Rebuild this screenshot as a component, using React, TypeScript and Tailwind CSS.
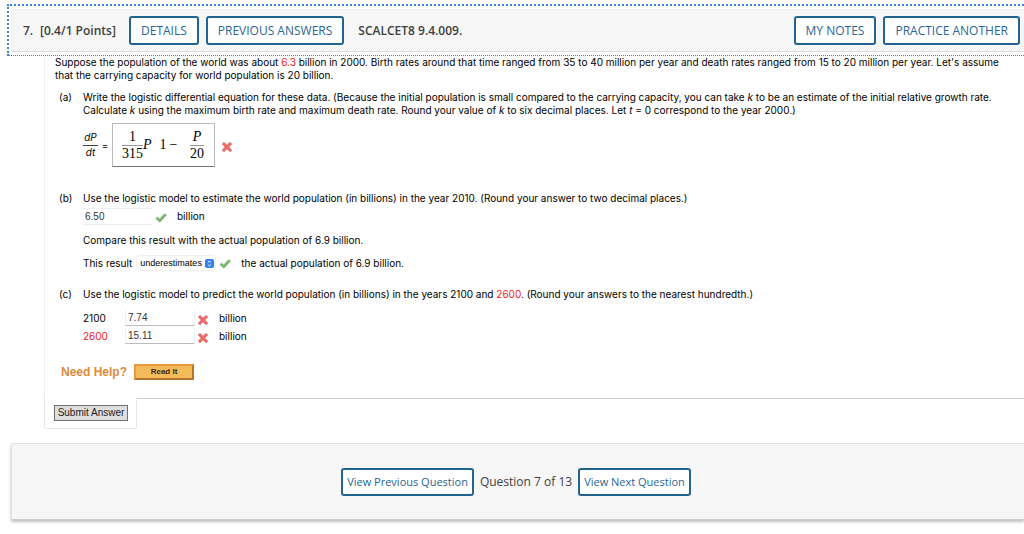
import type { ReactNode } from "react";

function Cross() {
  return (
    <svg width="12" height="12" viewBox="0 0 12 12" role="img" aria-label="Incorrect">
      <path
        d="M3 1.2 6 4 9 1.2 11 3 8.1 6 11 9.2 9 11 6 8 3 11 1 9.2 3.9 6 1 3Z"
        fill="#e96c69"
        stroke="#e8817e"
        strokeWidth="0.6"
        strokeLinejoin="round"
      />
    </svg>
  );
}

function Check() {
  return (
    <svg width="12" height="12" viewBox="0 0 12 12" role="img" aria-label="Correct">
      <path
        d="M0.8 6.6 2.7 5.2 4.6 7 9.6 1.8 11.5 3 4.9 10.2Z"
        fill="#74b266"
        stroke="#8fc384"
        strokeWidth="1"
        strokeLinejoin="round"
      />
    </svg>
  );
}

function HeaderButton({ children }: { children: ReactNode }) {
  return (
    <button
      type="button"
      className="h-[29px] shrink-0 rounded-[3px] border-2 border-[#22638f] bg-white px-[10px] text-[12px] font-medium whitespace-nowrap text-[#286695]"
    >
      {children}
    </button>
  );
}

function NavButton({ children }: { children: ReactNode }) {
  return (
    <button
      type="button"
      className="h-7 rounded-[3px] border-2 border-[#22638f] bg-white px-1 text-[11px] whitespace-nowrap text-[#286695]"
    >
      {children}
    </button>
  );
}

function Part({ label, children }: { label: string; children: ReactNode }) {
  return (
    <section className="flex pl-1">
      <span className="w-6 shrink-0">{label}</span>
      <div className="grow">{children}</div>
    </section>
  );
}

function Prediction({ year, value, red }: { year: string; value: string; red?: boolean }) {
  return (
    <div className="flex h-[18px] items-center">
      <label htmlFor={"y" + year} className={red ? "w-[42px] text-[#f01818]" : "w-[42px]"}>
        {year}
      </label>
      <input
        id={"y" + year}
        defaultValue={value}
        className="h-4 w-[70px] border border-t-0 border-[#eeeeee] border-b-[#bdbdbd] px-[2px] font-['Liberation_Sans',sans-serif] text-[10px] text-[#333]"
      />
      <span className="mt-1 ml-[2px]">
        <Cross />
      </span>
      <span className="ml-[10px]">billion</span>
    </div>
  );
}

export default function App() {
  return (
    <div className="overflow-x-hidden bg-white pt-1 pb-3 font-['Inter',sans-serif] text-[10px] leading-[13px] text-black">
      <header className="ml-[7px] border-t-2 border-b border-l-2 border-dotted border-[#3c82d8] pt-[3px] pb-[3px] pl-[2px]">
        <div className="flex h-[43px] items-center rounded-l-[2px] border border-r-0 border-[#eeeeee] border-b-[#d8d8d8] bg-[#f6f6f6] pr-1 pl-[11px] font-['Open_Sans',sans-serif] text-[12px] font-semibold text-[#404040]">
          <span className="w-[17px]">7.</span>
          <span className="w-[89px] whitespace-nowrap">[0.4/1 Points]</span>
          <div className="flex gap-[7px]">
            <HeaderButton>DETAILS</HeaderButton>
            <HeaderButton>PREVIOUS ANSWERS</HeaderButton>
          </div>
          <span className="ml-[14px] whitespace-nowrap">SCALCET8 9.4.009.</span>
          <div className="ml-auto flex gap-[7px]">
            <HeaderButton>MY NOTES</HeaderButton>
            <HeaderButton>PRACTICE ANOTHER</HeaderButton>
          </div>
        </div>
      </header>

      <main className="ml-11">
        <div className="border-l border-[#f0f0f0] pr-3 pb-[18px] pl-[10px]">
          <p>
            Suppose the population of the world was about <span className="text-[#f01818]">6.3</span> billion in
            2000. Birth rates around that time ranged from 35 to 40 million per year and death rates ranged from 15
            to 20 million per year. Let's assume
            <br />
            that the carrying capacity for world population is 20 billion.
          </p>

          <div className="mt-[9px]">
            <Part label="(a)">
              <p>
                Write the logistic differential equation for these data. (Because the initial population is small
                compared to the carrying capacity, you can take <i>k</i> to be an estimate of the initial relative
                growth rate.
                <br />
                Calculate <i>k</i> using the maximum birth rate and maximum death rate. Round your value of <i>k</i>{" "}
                to six decimal places. Let <i>t</i> = 0 correspond to the year 2000.)
              </p>
              <div className="mt-[6px] flex items-center">
                <span className="flex w-[15px] flex-col text-center italic">
                  <span className="border-b border-[#444] pb-px">dP</span>
                  <span>dt</span>
                </span>
                <span className="w-[14px] text-center">=</span>
                <div className="flex h-11 w-[103px] items-center border border-[#bbb] border-b-[#777] pr-[10px] pl-[9px] font-['Liberation_Serif',serif] text-[14px] leading-4">
                  <span className="flex w-[21px] flex-col text-center">
                    <span className="border-b border-[#999]">1</span>
                    <span>315</span>
                  </span>
                  <i>P</i>
                  <span className="ml-[8px]">1</span>
                  <span className="ml-[3px]">−</span>
                  <span className="ml-auto flex w-[14px] flex-col text-center">
                    <i className="border-b border-[#999]">P</i>
                    <span>20</span>
                  </span>
                </div>
                <span className="mt-1 ml-[6px]">
                  <Cross />
                </span>
              </div>
            </Part>
          </div>

          <div className="mt-[25px]">
            <Part label="(b)">
              <label htmlFor="population">
                Use the logistic model to estimate the world population (in billions) in the year 2010. (Round your
                answer to two decimal places.)
              </label>
              <div className="mt-[3px] flex items-center">
                <input
                  id="population"
                  defaultValue="6.50"
                  className="h-[17px] w-[70px] border-y border-[#eeeeee] px-[2px] font-['Liberation_Sans',sans-serif] text-[10px] text-[#333]"
                />
                <span className="mt-[2px] ml-[2px]">
                  <Check />
                </span>
                <span className="ml-[10px]">billion</span>
              </div>
              <p className="mt-[9px]">Compare this result with the actual population of 6.9 billion.</p>
              <div className="mt-2 flex items-center">
                <label htmlFor="comparison">This result</label>
                <span className="ml-1 flex h-4 items-center rounded-[4px] border border-[#f0f0f0] pr-px">
                  <select
                    id="comparison"
                    defaultValue="underestimates"
                    className="w-[68px] appearance-none pl-[3px] font-['Liberation_Sans',sans-serif] text-[9px]"
                  >
                    <option>underestimates</option>
                    <option>overestimates</option>
                  </select>
                  <svg width="9" height="9" viewBox="0 0 9 9" aria-hidden="true">
                    <rect width="9" height="9" rx="2" fill="#2f7ff2" />
                    <path d="M2.8 3.6 4.5 2 6.2 3.6M2.8 5.4 4.5 7 6.2 5.4" fill="none" stroke="#fff" />
                  </svg>
                </span>
                <span className="mt-[2px] ml-[3px]">
                  <Check />
                </span>
                <span className="ml-[10px]">the actual population of 6.9 billion.</span>
              </div>
            </Part>
          </div>

          <div className="mt-[17px]">
            <Part label="(c)">
              <p>
                Use the logistic model to predict the world population (in billions) in the years 2100 and{" "}
                <span className="text-[#f01818]">2600</span>. (Round your answers to the nearest hundredth.)
              </p>
              <div className="mt-2">
                <Prediction year="2100" value="7.74" />
                <Prediction year="2600" value="15.11" red />
              </div>
            </Part>
          </div>

          <div className="mt-[19px] flex items-center gap-[7px] pl-[6px] font-['Liberation_Sans',sans-serif] font-bold">
            <span className="text-[12px] text-[#dc8b3a]">Need Help?</span>
            <button
              type="button"
              className="h-4 w-[60px] border-2 border-[#e89a3f] border-r-[#b9742c] border-b-[#b9742c] bg-[#f2ba58] text-[8px] leading-3 text-[#3a2a10]"
            >
              Read It
            </button>
          </div>
        </div>

        <div className="flex">
          <div className="w-[93px] rounded-b-[2px] border border-t-0 border-[#e6e6e6] pt-[7px] pb-[7px] pl-[9px]">
            <button
              type="button"
              className="block h-4 w-[74px] border border-[#707070] bg-[#dedede] font-['Liberation_Sans',sans-serif] text-[10px] leading-[14px] whitespace-nowrap text-[#222]"
            >
              Submit Answer
            </button>
          </div>
          <div className="grow border-t border-[#cfcfcf]" />
        </div>
      </main>

      <nav
        aria-label="Questions"
        className="mt-[14px] ml-[11px] flex h-[77px] items-center justify-center gap-[6px] rounded-l-[2px] border border-r-0 border-[#e2e2e2] border-b-[#cccccc] bg-[#f6f6f6] pr-[4px] font-['Open_Sans',sans-serif] text-[12px] text-[#404040] shadow-[0_2px_3px_rgba(0,0,0,0.25)]"
      >
        <NavButton>View Previous Question</NavButton>
        <span>Question 7 of 13</span>
        <NavButton>View Next Question</NavButton>
      </nav>
    </div>
  );
}
